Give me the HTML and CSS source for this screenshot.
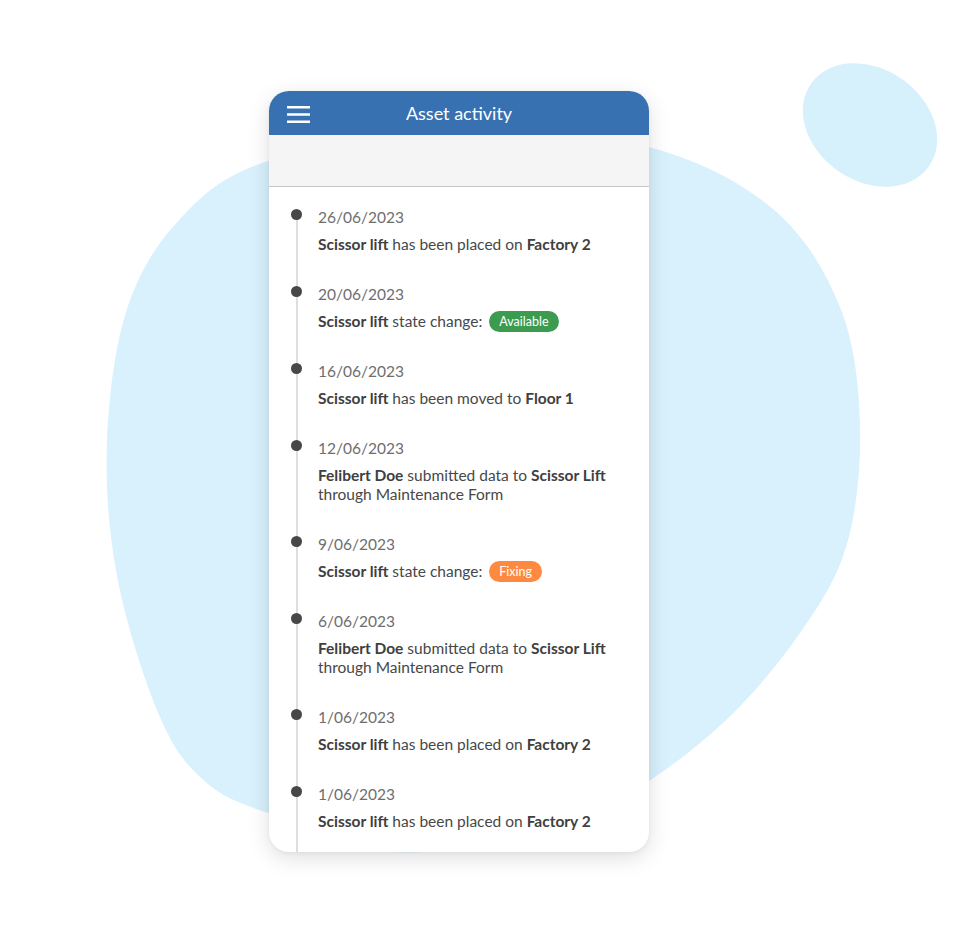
FILE: index.html
```html
<!DOCTYPE html>
<html lang="en">
<head>
<meta charset="utf-8">
<title>Asset activity</title>
<link rel="stylesheet" href="styles.css">
</head>
<body>
<svg class="backdrop" width="966" height="930" viewBox="0 0 966 930" aria-hidden="true">
  <path class="blob" d="M463,125 C526.5,122.7 597.3,133 649,147 C700.7,161 741.2,182.3 773,209 C804.8,235.7 825.5,271.2 840,307 C854.5,342.8 858.8,384.5 860,424 C861.2,463.5 857,509.2 847,544 C837,578.8 820.7,603.2 800,633 C779.3,662.8 750,698 723,723 C700,744 675,764 649,781 C605,806 485.5,846.7 422,852 C358.5,857.3 305,825.5 268,813 C231,800.5 218.5,794.2 200,777 C181.5,759.8 170.8,743.5 157,710 C143.2,676.5 125.3,620.7 117,576 C108.7,531.3 105.3,486.5 107,442 C108.7,397.5 114.8,346.2 127,309 C139.2,271.8 156.5,243.7 180,219 C203.5,194.3 220.8,176.7 268,161 C315.2,145.3 399.5,127.3 463,125 Z"/>
  <ellipse class="blob small" cx="870" cy="125" rx="72" ry="56" transform="rotate(35 870 125)"/>
</svg>

<main class="card">
  <header class="appbar">
    <svg class="menu" width="24" height="20" viewBox="0 0 24 20" aria-hidden="true">
      <path d="M0 3.2H23M0 10.5H23M0 17.8H23" stroke="#fff" stroke-width="2.6"/>
    </svg>
    <h1 class="title">Asset activity</h1>
  </header>
  <div class="toolbar"></div>
  <ol class="timeline">
    <li class="event">
      <div class="date">26/06/2023</div>
      <p class="text"><b>Scissor lift</b> has been placed on <b>Factory 2</b></p>
    </li>
    <li class="event">
      <div class="date">20/06/2023</div>
      <p class="text"><b>Scissor lift</b> state change: <span class="badge available">Available</span></p>
    </li>
    <li class="event">
      <div class="date">16/06/2023</div>
      <p class="text"><b>Scissor lift</b> has been moved to <b>Floor 1</b></p>
    </li>
    <li class="event">
      <div class="date">12/06/2023</div>
      <p class="text"><b>Felibert Doe</b> submitted data to <b>Scissor Lift</b><br>through Maintenance Form</p>
    </li>
    <li class="event">
      <div class="date">9/06/2023</div>
      <p class="text"><b>Scissor lift</b> state change: <span class="badge fixing">Fixing</span></p>
    </li>
    <li class="event">
      <div class="date">6/06/2023</div>
      <p class="text"><b>Felibert Doe</b> submitted data to <b>Scissor Lift</b><br>through Maintenance Form</p>
    </li>
    <li class="event">
      <div class="date">1/06/2023</div>
      <p class="text"><b>Scissor lift</b> has been placed on <b>Factory 2</b></p>
    </li>
    <li class="event">
      <div class="date">1/06/2023</div>
      <p class="text"><b>Scissor lift</b> has been placed on <b>Factory 2</b></p>
    </li>
  </ol>
</main>
</body>
</html>
```

FILE: styles.css
```css
* { box-sizing: border-box; }

html, body {
  margin: 0;
  padding: 0;
  background: #ffffff;
}

body {
  position: relative;
  width: 966px;
  height: 930px;
  overflow: hidden;
  font-family: Lato, "Open Sans", "Liberation Sans", sans-serif;
  padding-top: 91px;
  padding-left: 269px;
}

.backdrop {
  position: absolute;
  left: 0;
  top: 0;
}

.blob { fill: #d8f1fd; }
.blob.small { fill: #d6f0fc; }

.card {
  position: relative;
  width: 380px;
  height: 761px;
  background: #ffffff;
  border-radius: 20px;
  overflow: hidden;
  box-shadow: 0 6px 22px rgba(0, 0, 0, 0.13), 0 1px 4px rgba(0, 0, 0, 0.05);
  display: flex;
  flex-direction: column;
}

.appbar {
  height: 44px;
  flex: none;
  background: #3771b1;
  display: flex;
  align-items: center;
  position: relative;
  padding-left: 18px;
}

.menu { display: block; margin-top: 1px; }

.title {
  position: absolute;
  left: 0;
  right: 0;
  top: 0;
  margin: 0;
  line-height: 44px;
  text-align: center;
  color: #ffffff;
  font-size: 18px;
  font-weight: 400;
  pointer-events: none;
}

.toolbar {
  height: 52px;
  flex: none;
  background: #f5f5f5;
  border-bottom: 1px solid #c6c6c6;
}

.timeline {
  position: relative;
  list-style: none;
  margin: 0;
  padding: 21px 0 0 49px;
  flex: 1;
}

.timeline::before {
  content: "";
  position: absolute;
  left: 27px;
  top: 26px;
  bottom: 0;
  width: 2px;
  background: #dedede;
}

.event {
  position: relative;
  margin-bottom: 31px;
}

.event::before {
  content: "";
  position: absolute;
  left: -27px;
  top: 1px;
  width: 11px;
  height: 11px;
  border-radius: 50%;
  background: #474747;
}

.date {
  font-size: 15.5px;
  line-height: 19px;
  color: #6e6e6e;
}

.text {
  margin: 8px 0 0;
  font-size: 15.5px;
  line-height: 19px;
  color: #484848;
}

.text b {
  font-weight: 700;
  color: #404040;
}

.badge {
  display: inline-block;
  vertical-align: top;
  margin: -1px 0 -1px 3px;
  padding: 0 10px;
  height: 21px;
  line-height: 21px;
  border-radius: 11px;
  font-size: 12.5px;
  color: #ffffff;
}

.badge.available { background: #3c9b4f; }
.badge.fixing { background: #fd8a40; }
```
